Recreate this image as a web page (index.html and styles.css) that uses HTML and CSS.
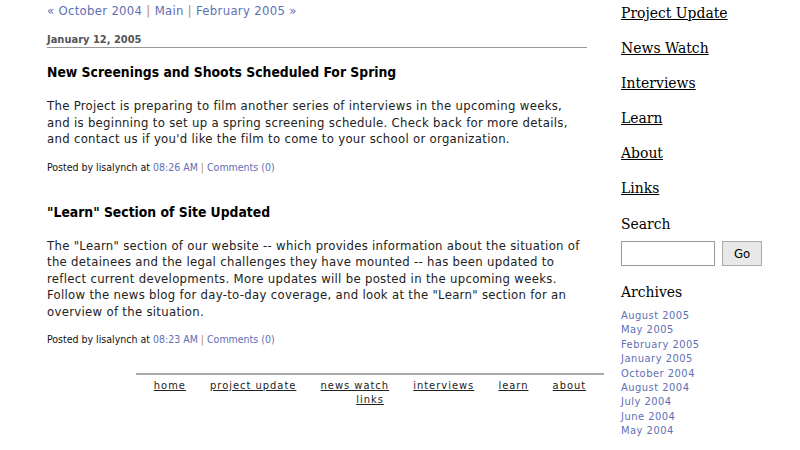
FILE: index.html
```html
<!DOCTYPE html>
<html lang="en">
<head>
    <meta charset="UTF-8">
    <title>Project Update</title>
    <link rel="stylesheet" href="styles.css">
</head>
<body>
    <div class="page">
        <div class="content">
            <div class="main">
                <p class="pager"><a href="#">&laquo; October 2004</a> <span class="sep">|</span> <a href="#">Main</a> <span class="sep">|</span> <a href="#">February 2005 &raquo;</a></p>
                <h2 class="date">January 12, 2005</h2>

                <div class="entry">
                    <h3 class="title">New Screenings and Shoots Scheduled For Spring</h3>
                    <p>The Project is preparing to film another series of interviews in the upcoming weeks, and is beginning to set up a spring screening schedule. Check back for more details, and contact us if you'd like the film to come to your school or organization.</p>
                    <p class="posted">Posted by lisalynch at <a href="#">08:26 AM</a> <span class="sep">|</span> <a href="#">Comments (0)</a></p>
                </div>

                <div class="entry">
                    <h3 class="title">"Learn" Section of Site Updated</h3>
                    <p>The "Learn" section of our website -- which provides information about the situation of the detainees and the legal challenges they have mounted -- has been updated to reflect current developments. More updates will be posted in the upcoming weeks. Follow the news blog for day-to-day coverage, and look at the "Learn" section for an overview of the situation.</p>
                    <p class="posted">Posted by lisalynch at <a href="#">08:23 AM</a> <span class="sep">|</span> <a href="#">Comments (0)</a></p>
                </div>
            </div>
            <div class="footer">
                <a href="#">home</a> <a href="#">project update</a> <a href="#">news watch</a> <a href="#">interviews</a> <a href="#">learn</a> <a href="#">about</a> <a href="#">links</a>
            </div>
        </div>

        <div class="sidebar">
            <a class="nav" href="#">Project Update</a>
            <a class="nav" href="#">News Watch</a>
            <a class="nav" href="#">Interviews</a>
            <a class="nav" href="#">Learn</a>
            <a class="nav" href="#">About</a>
            <a class="nav" href="#">Links</a>
            <h4 class="side-title">Search</h4>
            <form class="search">
                <input type="text" class="search-box">
                <button type="button" class="search-go">Go</button>
            </form>
            <h4 class="side-title">Archives</h4>
            <ul class="archives">
                <li><a href="#">August 2005</a></li>
                <li><a href="#">May 2005</a></li>
                <li><a href="#">February 2005</a></li>
                <li><a href="#">January 2005</a></li>
                <li><a href="#">October 2004</a></li>
                <li><a href="#">August 2004</a></li>
                <li><a href="#">July 2004</a></li>
                <li><a href="#">June 2004</a></li>
                <li><a href="#">May 2004</a></li>
            </ul>
        </div>
    </div>
</body>
</html>
```

FILE: styles.css
```css
body {
    margin: 0;
    padding: 0;
    background-color: #fff;
    font-family: "DejaVu Sans Condensed", "DejaVu Sans", sans-serif;
    color: #222;
}
a {
    color: #5e6fb5;
    text-decoration: none;
}
.page {
    display: flex;
    padding-left: 47px;
}
.content {
    width: 557px;
}
.main {
    width: 540px;
}
.pager {
    margin: 2px 0 0;
    font-size: 13px;
    letter-spacing: 0.3px;
    line-height: 18px;
}
.pager .sep, .posted .sep {
    color: #c08a2a;
}
.date {
    margin: 13px 0 0;
    font-size: 11px;
    font-weight: bold;
    color: #555;
    line-height: 14px;
    border-bottom: 1px solid #999;
}
.entry {
    margin-top: 14px;
}
.title {
    margin: 0;
    font-size: 13.8px;
    font-weight: bold;
    color: #000;
    line-height: 20px;
}
.entry p {
    margin: 16px 0 0;
    font-size: 13px;
    line-height: 16.5px;
    letter-spacing: 0.3px;
    color: #222;
}
.entry p.posted {
    margin-top: 12px;
    font-size: 10.5px;
    line-height: 14px;
    letter-spacing: 0;
    color: #111;
}
.entry + .entry {
    margin-top: 28px;
}
.footer {
    margin: 27px 0 0 89px;
    width: 468px;
    border-top: 2px solid #aaa;
    padding-top: 4px;
    text-align: center;
    font-size: 11px;
    line-height: 14px;
    letter-spacing: 1px;
}
.footer a {
    color: #222;
    text-decoration: underline;
    margin: 0 10px;
}
.sidebar {
    margin-left: 17px;
    display: flex;
    flex-direction: column;
    align-items: flex-start;
    font-family: "DejaVu Serif Condensed", "DejaVu Serif", serif;
}
.nav {
    color: #000;
    text-decoration: underline;
    font-size: 15.5px;
    line-height: 20px;
    margin-top: 15px;
}
.nav:first-child {
    margin-top: 3px;
}
.side-title {
    margin: 16px 0 0;
    font-size: 15.5px;
    font-weight: normal;
    line-height: 20px;
    color: #000;
}
.search {
    display: flex;
    gap: 7px;
    margin-top: 7px;
}
.search-box {
    width: 92px;
    height: 23px;
    padding: 0;
    border: 1px solid #999;
}
.search-go {
    width: 40px;
    height: 25px;
    border: 1px solid #aaa;
    background: #e8e8e8;
    font-family: "DejaVu Sans Condensed", sans-serif;
    font-size: 13px;
    padding: 0;
}
.archives {
    list-style: none;
    margin: 7px 0 0;
    padding: 0;
    font-family: "DejaVu Sans Condensed", "DejaVu Sans", sans-serif;
    font-size: 11px;
    line-height: 14.4px;
    letter-spacing: 0.5px;
}
```
